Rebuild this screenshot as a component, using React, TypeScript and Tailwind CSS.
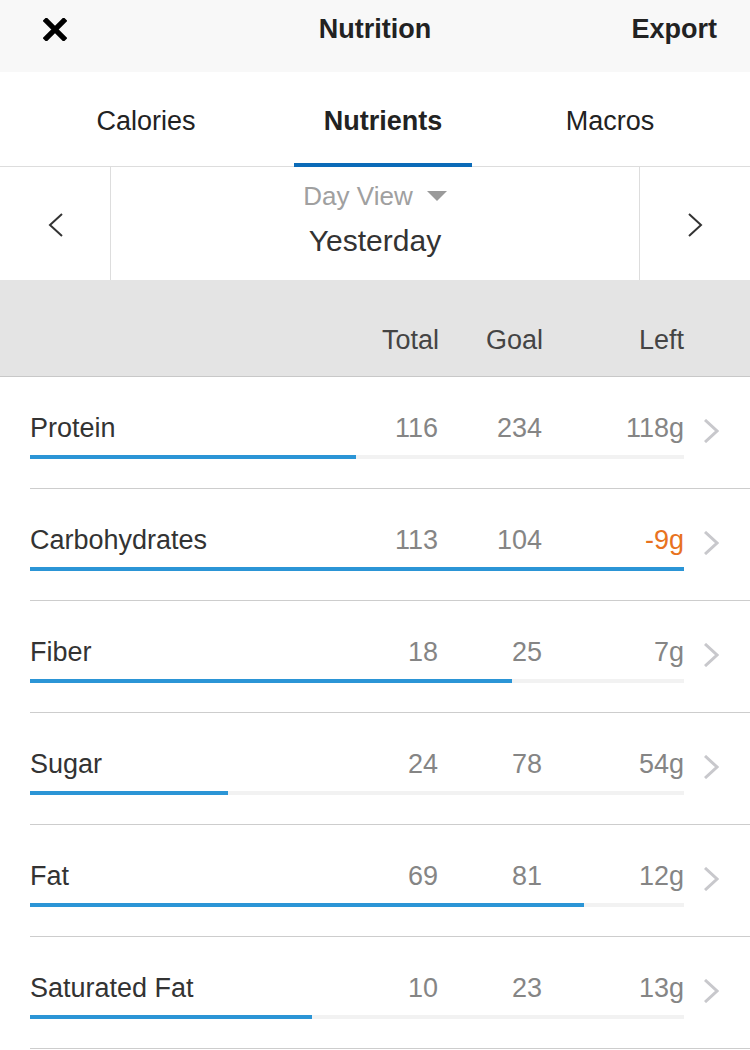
import React from 'react';

type Row = { name: string; total: number; goal: number; left: string; fill: number; over?: boolean };

const rows: Row[] = [
    { name: 'Protein', total: 116, goal: 234, left: '118g', fill: 326 },
    { name: 'Carbohydrates', total: 113, goal: 104, left: '-9g', fill: 654, over: true },
    { name: 'Fiber', total: 18, goal: 25, left: '7g', fill: 482 },
    { name: 'Sugar', total: 24, goal: 78, left: '54g', fill: 198 },
    { name: 'Fat', total: 69, goal: 81, left: '12g', fill: 554 },
    { name: 'Saturated Fat', total: 10, goal: 23, left: '13g', fill: 282 },
];

const font = { fontFamily: '"Liberation Sans", Arial, sans-serif' };

const Chevron = ({ dir, className, weight = 2 }: { dir: 'left' | 'right'; className?: string; weight?: number }) => (
    <svg viewBox="0 0 15 24" className={className} fill="none">
        {dir === 'left' ? (
            <path d="M14 1 L2 12 L14 23" stroke="currentColor" strokeWidth={weight} />
        ) : (
            <path d="M1 1 L13 12 L1 23" stroke="currentColor" strokeWidth={weight} />
        )}
    </svg>
);

const NutrientRow = ({ row }: { row: Row }) => (
    <div className="h-[112px] pl-[30px] pt-[35px]">
        <div className="flex items-center">
            <div className="w-[654px] flex text-[27px] leading-[32px]">
                <span className="flex-1 text-[#333]">{row.name}</span>
                <span className="w-[80px] text-right text-[#858585]">{row.total}</span>
                <span className="w-[104px] text-right text-[#858585]">{row.goal}</span>
                <span className={`w-[142px] text-right ${row.over ? 'text-[#e8721e]' : 'text-[#858585]'}`}>{row.left}</span>
            </div>
            <Chevron dir="right" weight={3} className="ml-[20px] mt-[6px] w-[15px] h-[24px] text-[#c8c8cc]" />
        </div>
        <div className="w-[654px] h-[4px] mt-[11px] bg-[#f2f2f2]">
            <div className="h-full bg-[#2b95d6]" style={{ width: row.fill }} />
        </div>
        <div className="mt-[29px] h-px bg-[#cdcdcd]" />
    </div>
);

export default function App() {
    return (
        <div className="w-[750px] h-[1050px] bg-white overflow-hidden" style={font}>
            {/* Top bar */}
            <div className="h-[72px] bg-[#f8f8f8] grid grid-cols-[1fr_auto_1fr] items-center px-[33px] pb-[14px]">
                <svg viewBox="0 0 24 24" className="w-[24px] h-[23px] ml-[10px]">
                    <path d="M3 3 L21 21 M21 3 L3 21" stroke="#000" strokeWidth="5.5" strokeLinecap="square" />
                </svg>
                <div className="text-center text-[27px] font-bold text-[#222]">Nutrition</div>
                <div className="text-right text-[27px] font-bold text-[#222]">Export</div>
            </div>

            {/* Tabs */}
            <div className="h-[95px] flex border-b border-[#dddddd] pl-[57px]">
                <div className="w-[178px] flex items-center justify-center text-[27px] text-[#222] pt-[4px]">Calories</div>
                <div className="w-[178px] ml-[59px] flex items-center justify-center text-[27px] font-bold text-[#222] border-b-4 border-[#0b6bb8] mb-[-1px] pt-[8px]">Nutrients</div>
                <div className="w-[178px] ml-[49px] flex items-center justify-center text-[27px] text-[#222] pt-[4px]">Macros</div>
            </div>

            {/* Date navigation */}
            <div className="h-[113px] flex">
                <div className="w-[111px] border-r border-[#dddddd] flex items-center justify-center">
                    <Chevron dir="left" className="w-[15px] h-[24px] text-[#333] mt-[2px]" />
                </div>
                <div className="flex-1 flex flex-col items-center pt-[13px]">
                    <div className="flex items-center text-[26px] leading-[32px] text-[#a0a0a0]">
                        <span>Day View</span>
                        <svg viewBox="0 0 20 10" className="w-[20px] h-[10px] ml-[14px]">
                            <path d="M0 0 L20 0 L10 10 Z" fill="#9a9a9a" />
                        </svg>
                    </div>
                    <div className="text-[30px] leading-[36px] mt-[11px] text-[#333]">Yesterday</div>
                </div>
                <div className="w-[111px] border-l border-[#dddddd] flex items-center justify-center">
                    <Chevron dir="right" className="w-[15px] h-[24px] text-[#333] mt-[2px]" />
                </div>
            </div>

            {/* Column header */}
            <div className="h-[97px] bg-[#e4e4e4] border-b border-[#c8c8c8] pl-[30px] flex items-end pb-[20px]">
                <div className="w-[654px] flex text-[27px] leading-[32px] text-[#444]">
                    <span className="flex-1" />
                    <span className="w-[82px] text-right">Total</span>
                    <span className="w-[104px] text-right">Goal</span>
                    <span className="w-[141px] text-right">Left</span>
                </div>
            </div>

            {rows.map((r) => (
                <NutrientRow key={r.name} row={r} />
            ))}
        </div>
    );
}
